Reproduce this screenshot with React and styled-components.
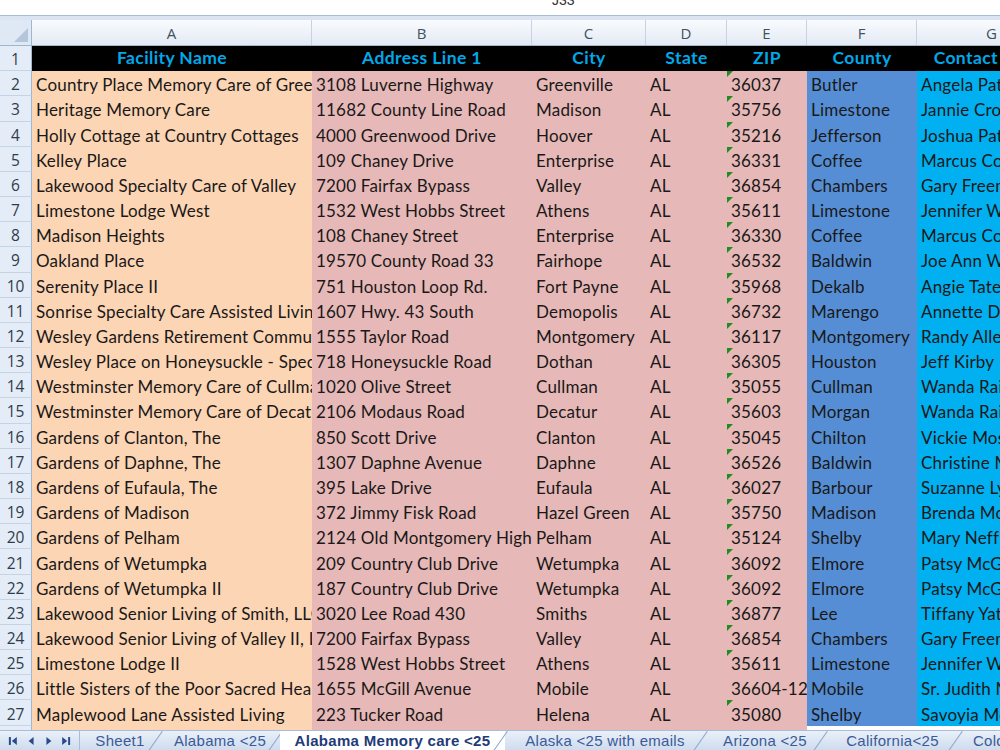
import React from "react";
import styled, { createGlobalStyle } from "styled-components";

const GlobalStyle = createGlobalStyle`
  html, body { margin: 0; padding: 0; background: #ffffff; }
  body { font-family: Lato, "Open Sans", sans-serif; }
  * { box-sizing: border-box; }
`;

const COLS = "32px 280px 220px 114px 81px 80px 110px 150px";
const PEACH = "#fcd5b4";
const PINK = "#e6b8b7";
const BLUE = "#558ed5";
const CYAN = "#00b0f0";

const fills = [PEACH, PINK, PINK, PINK, PINK, BLUE, CYAN];

const heads = ["Facility Name", "Address Line 1", "City", "State", "ZIP", "County", "Contact Name"];

const rows = [
  ["Country Place Memory Care of Greenville", "3108 Luverne Highway", "Greenville", "AL", "36037", "Butler", "Angela Patterson"],
  ["Heritage Memory Care", "11682 County Line Road", "Madison", "AL", "35756", "Limestone", "Jannie Crowell"],
  ["Holly Cottage at Country Cottages", "4000 Greenwood Drive", "Hoover", "AL", "35216", "Jefferson", "Joshua Patton"],
  ["Kelley Place", "109 Chaney Drive", "Enterprise", "AL", "36331", "Coffee", "Marcus Cowart"],
  ["Lakewood Specialty Care of Valley", "7200 Fairfax Bypass", "Valley", "AL", "36854", "Chambers", "Gary Freeman"],
  ["Limestone Lodge West", "1532 West Hobbs Street", "Athens", "AL", "35611", "Limestone", "Jennifer Wilson"],
  ["Madison Heights", "108 Chaney Street", "Enterprise", "AL", "36330", "Coffee", "Marcus Cowart"],
  ["Oakland Place", "19570 County Road 33", "Fairhope", "AL", "36532", "Baldwin", "Joe Ann Williams"],
  ["Serenity Place II", "751 Houston Loop Rd.", "Fort Payne", "AL", "35968", "Dekalb", "Angie Tate"],
  ["Sonrise Specialty Care Assisted Living", "1607 Hwy. 43 South", "Demopolis", "AL", "36732", "Marengo", "Annette Davis"],
  ["Wesley Gardens Retirement Community", "1555 Taylor Road", "Montgomery", "AL", "36117", "Montgomery", "Randy Allen"],
  ["Wesley Place on Honeysuckle - Special Care", "718 Honeysuckle Road", "Dothan", "AL", "36305", "Houston", "Jeff Kirby"],
  ["Westminster Memory Care of Cullman", "1020 Olive Street", "Cullman", "AL", "35055", "Cullman", "Wanda Rains"],
  ["Westminster Memory Care of Decatur", "2106 Modaus Road", "Decatur", "AL", "35603", "Morgan", "Wanda Rains"],
  ["Gardens of Clanton, The", "850 Scott Drive", "Clanton", "AL", "35045", "Chilton", "Vickie Moss"],
  ["Gardens of Daphne, The", "1307 Daphne Avenue", "Daphne", "AL", "36526", "Baldwin", "Christine Miller"],
  ["Gardens of Eufaula, The", "395 Lake Drive", "Eufaula", "AL", "36027", "Barbour", "Suzanne Lyons"],
  ["Gardens of Madison", "372 Jimmy Fisk Road", "Hazel Green", "AL", "35750", "Madison", "Brenda McCoy"],
  ["Gardens of Pelham", "2124 Old Montgomery Highway", "Pelham", "AL", "35124", "Shelby", "Mary Neff"],
  ["Gardens of Wetumpka", "209 Country Club Drive", "Wetumpka", "AL", "36092", "Elmore", "Patsy McGhee"],
  ["Gardens of Wetumpka II", "187 Country Club Drive", "Wetumpka", "AL", "36092", "Elmore", "Patsy McGhee"],
  ["Lakewood Senior Living of Smith, LLC", "3020 Lee Road 430", "Smiths", "AL", "36877", "Lee", "Tiffany Yates"],
  ["Lakewood Senior Living of Valley II, LLC", "7200 Fairfax Bypass", "Valley", "AL", "36854", "Chambers", "Gary Freeman"],
  ["Limestone Lodge II", "1528 West Hobbs Street", "Athens", "AL", "35611", "Limestone", "Jennifer Wilson"],
  ["Little Sisters of the Poor Sacred Heart", "1655 McGill Avenue", "Mobile", "AL", "36604-1294", "Mobile", "Sr. Judith Meyer"],
  ["Maplewood Lane Assisted Living", "223 Tucker Road", "Helena", "AL", "35080", "Shelby", "Savoyia McCall"],
];

const tabs = [
  { name: "Sheet1", w: 80 },
  { name: "Alabama <25", w: 120 },
  { name: "Alabama Memory care <25", w: 225, active: true },
  { name: "Alaska <25 with emails", w: 200 },
  { name: "Arizona <25", w: 120 },
  { name: "California<25", w: 135 },
  { name: "Colorado <25", w: 120 },
];

export default function App() {
  return (
    <>
      <GlobalStyle />
      <Window>
        <FormulaBar>
          <CellRef>J33</CellRef>
        </FormulaBar>
        <Sheet>
          <HeaderRow>
            <Corner>
              <svg width="14" height="14" viewBox="0 0 14 14">
                <polygon points="14,0 14,14 0,14" fill="#b6c6da" />
              </svg>
            </Corner>
            {"ABCDEFG".split("").map((l) => (
              <ColLetter key={l}>{l}</ColLetter>
            ))}
          </HeaderRow>
          <Row>
            <RowNum>1</RowNum>
            {heads.map((h) => (
              <HeadCell key={h}>{h}</HeadCell>
            ))}
          </Row>
          {rows.map((r, i) => (
            <Row key={i}>
              <RowNum>{i + 2}</RowNum>
              {r.map((v, j) => (
                <Cell key={j} $bg={fills[j]}>
                  {j === 4 && !v.includes("-") && <NumFlag />}
                  {v}
                </Cell>
              ))}
            </Row>
          ))}
          <Row>
            <RowNum>28</RowNum>
            {fills.map((f, j) => (
              <Cell key={j} $bg={j < 5 ? f : "#ffffff"} />
            ))}
          </Row>
        </Sheet>
        <TabBar>
          <NavButtons>
            <svg width="80" height="20" viewBox="0 0 80 20">
              <g fill="#2a4a8c">
                <rect x="9" y="6" width="2" height="8" />
                <polygon points="17,6 17,14 12,10" />
                <polygon points="34,6 34,14 29,10" />
                <polygon points="47,6 47,14 52,10" />
                <polygon points="63,6 63,14 68,10" />
                <rect x="69" y="6" width="2" height="8" />
              </g>
            </svg>
          </NavButtons>
          {tabs.map((t) => (
            <Tab key={t.name} $active={t.active} style={{ width: t.w }}>
              {t.name}
            </Tab>
          ))}
        </TabBar>
      </Window>
    </>
  );
}

const Window = styled.div`
  width: 1000px;
  height: 750px;
  overflow: hidden;
  display: flex;
  flex-direction: column;
  background: #ffffff;
`;

const FormulaBar = styled.div`
  height: 20px;
  flex: none;
  background: #ffffff;
  border-bottom: 4px solid #dbe5f1;
  box-shadow: inset 0 -1px 0 #a7bcd8;
  overflow: hidden;
`;

const CellRef = styled.div`
  padding-left: 552px;
  margin-top: -8px;
  font-family: "Liberation Sans", Arial, sans-serif;
  font-size: 14px;
  color: #333;
`;

const Sheet = styled.div`
  flex: 1;
  overflow: hidden;
`;

const HeaderRow = styled.div`
  display: grid;
  grid-template-columns: ${COLS};
  height: 26px;
  background: linear-gradient(#f9fbfe, #e3eaf4);
  border-bottom: 1px solid #9eb6ce;
`;

const Corner = styled.div`
  display: flex;
  align-items: flex-end;
  justify-content: flex-end;
  padding: 0 3px 3px 0;
  background: #dfe8f5;
  border-right: 1px solid #9eb6ce;
`;

const ColLetter = styled.div`
  display: flex;
  align-items: center;
  justify-content: center;
  font-family: "Open Sans", sans-serif;
  font-size: 15px;
  color: #41505f;
  border-right: 1px solid #c5d3e3;
`;

const Row = styled.div`
  display: grid;
  grid-template-columns: ${COLS};
  height: 25.18px;
`;

const RowNum = styled.div`
  display: flex;
  align-items: center;
  justify-content: center;
  padding-top: 2px;
  background: #e4ecf7;
  border-right: 1px solid #9eb6ce;
  border-bottom: 1px solid #c5d3e3;
  font-family: "Open Sans", sans-serif;
  font-size: 15.5px;
  color: #2f3c4b;
`;

const HeadCell = styled.div`
  background: #000000;
  color: #00a8e8;
  font-weight: 700;
  font-size: 17.5px;
  letter-spacing: 0.4px;
  display: flex;
  align-items: center;
  justify-content: center;
  padding-bottom: 2px;
  white-space: nowrap;
  overflow: hidden;
`;

const Cell = styled.div`
  position: relative;
  background: ${(p) => p.$bg};
  color: #1a1818;
  font-size: 17px;
  letter-spacing: 0.2px;
  display: flex;
  align-items: center;
  padding: 2px 0 0 4px;
  white-space: nowrap;
  overflow: hidden;
`;

const NumFlag = styled.span`
  position: absolute;
  left: 0;
  top: 0;
  width: 0;
  height: 0;
  border-top: 6px solid #1e8c1e;
  border-right: 6px solid transparent;
`;

const TabBar = styled.div`
  height: 20px;
  flex: none;
  display: flex;
  background: linear-gradient(#e9f0f9, #cfdcee);
  border-top: 1px solid #a9bdd8;
  overflow: hidden;
`;

const NavButtons = styled.div`
  width: 80px;
  flex: none;
  display: flex;
  align-items: center;
  border-right: 1px solid #a9bdd8;
`;

const Tab = styled.div`
  flex: none;
  position: relative;
  display: flex;
  align-items: center;
  justify-content: center;
  font-family: "Liberation Sans", Arial, sans-serif;
  font-size: 15px;
  letter-spacing: 0.3px;
  font-weight: ${(p) => (p.$active ? 700 : 400)};
  color: ${(p) => (p.$active ? "#1f3b78" : "#3b5a96")};
  background: ${(p) => (p.$active ? "#ffffff" : "transparent")};
  white-space: nowrap;
  &::after {
    content: "";
    position: absolute;
    right: 4px;
    top: -2px;
    width: 1px;
    height: 24px;
    background: #8fa7c9;
    transform: rotate(35deg);
  }
`;
